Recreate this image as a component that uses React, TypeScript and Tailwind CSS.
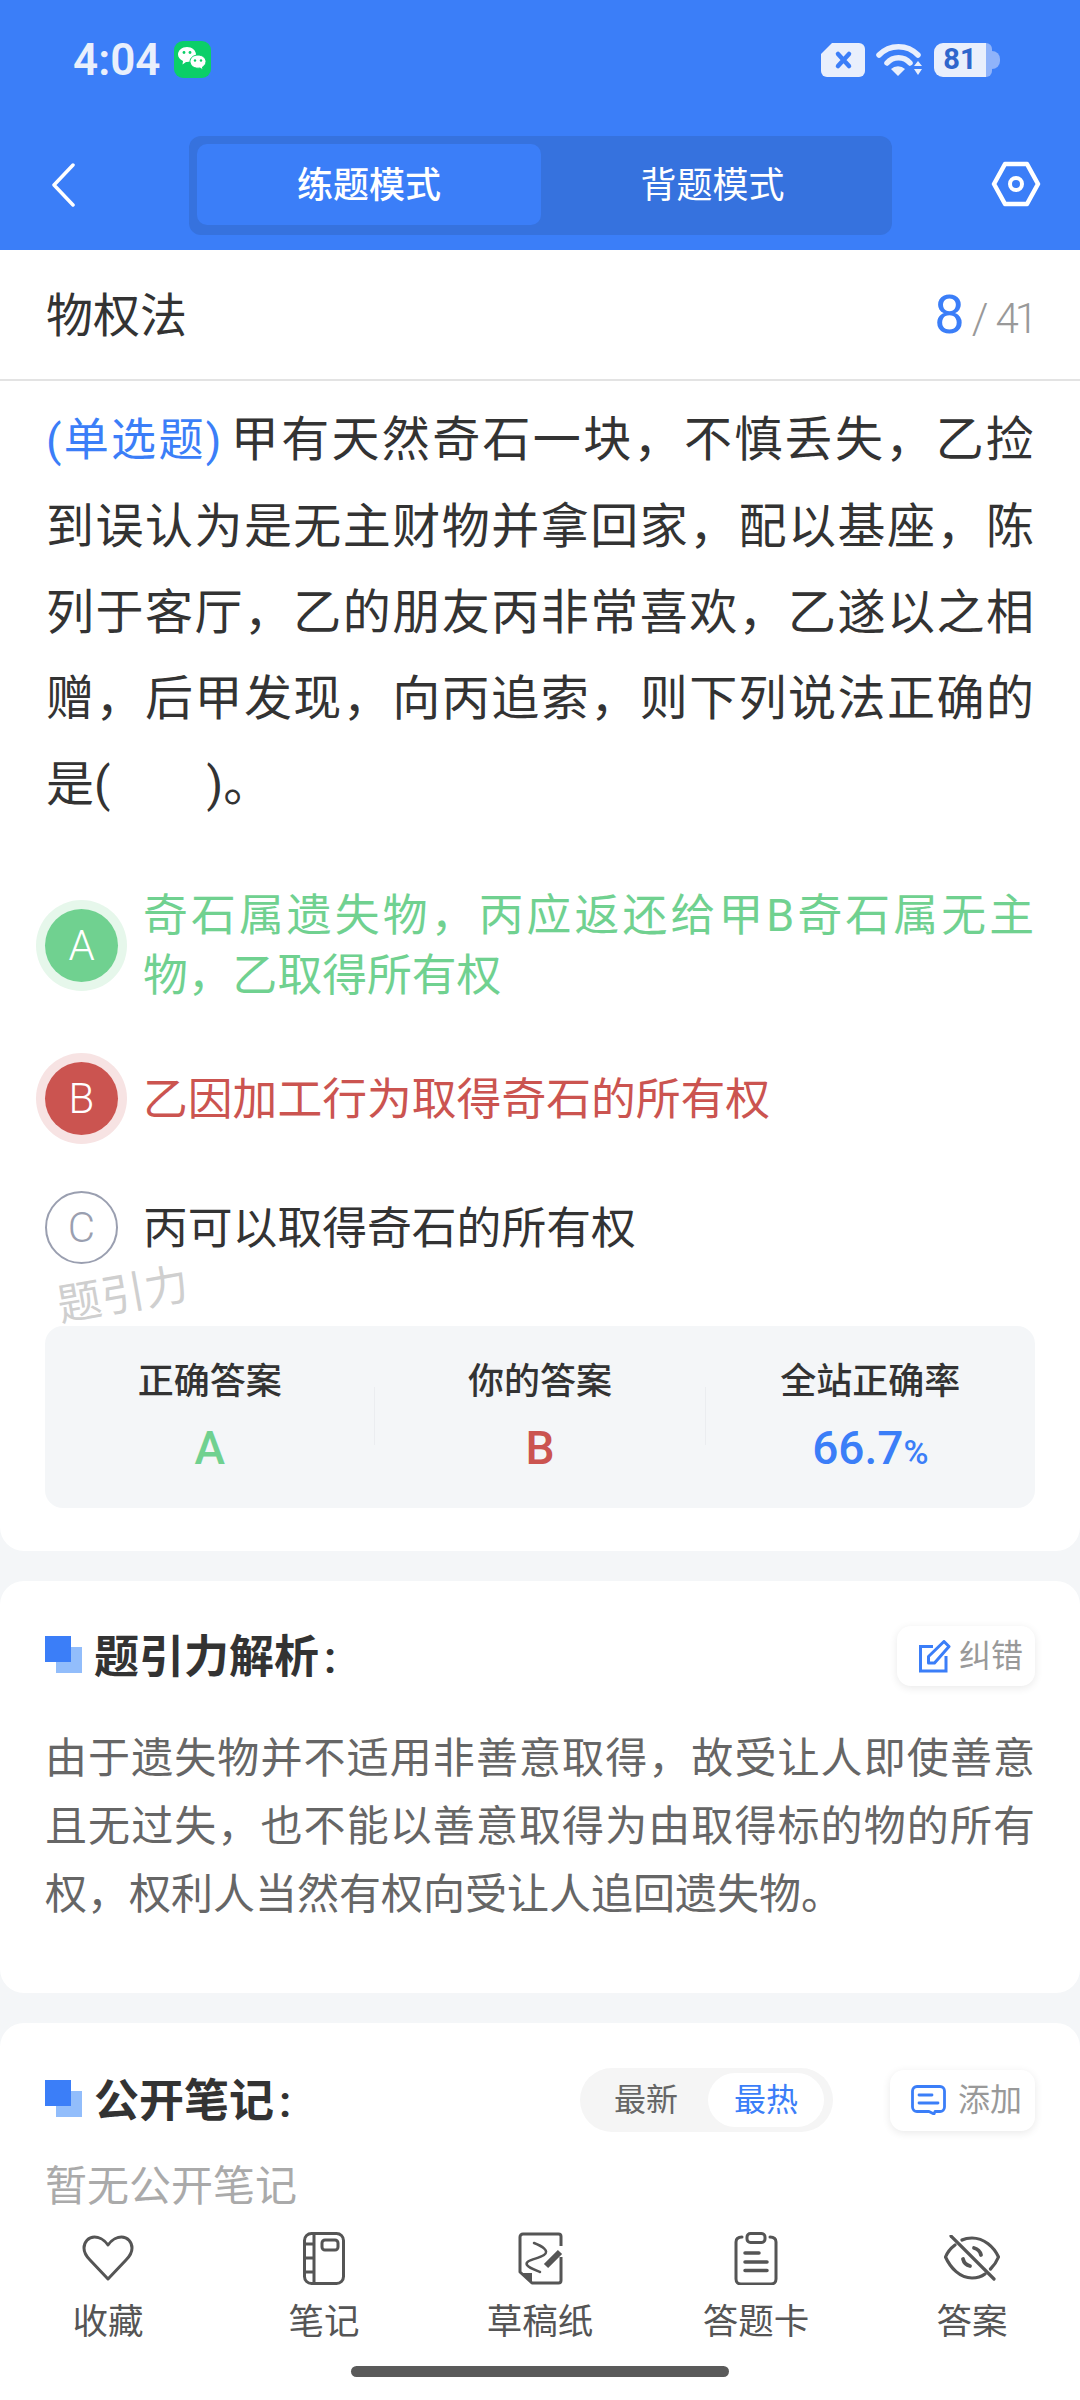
const sansFont = "font-['Roboto','Noto_Sans_CJK_SC',sans-serif]";

function StatusBar() {
  return (
    <div className="flex h-[120px] items-center justify-between pl-[73px] pr-[80px] pb-[1px]">
      <div className="flex items-center gap-[14px]">
        <span className="text-[44px] font-semibold leading-none text-[#e9effc]">4:04</span>
        <svg width="37" height="37" viewBox="0 0 37 37">
          <rect width="37" height="37" rx="9" fill="#0bcf68" />
          <path d="M13 6c5 0 9 3.500 9 7.500S18 21 13 21l-1 0-3.500 2.500 .5-3.500C6 18.500 4 16.500 4 13.500 4 9.500 8 6 13 6Z" fill="#fff" />
          <path d="M24 14c4.500 0 8 3 8 6.500 0 2.500-1.500 4.500-3.500 5.500l.5 3-3-2c-.7 .1-1.300 .2-2 .2-4.500 0-8-3-8-6.700S19.500 14 24 14Z" fill="#fff" stroke="#0bcf68" strokeWidth="1" />
          <circle cx="10" cy="11.500" r="1.400" fill="#0bcf68" />
          <circle cx="16" cy="11.500" r="1.400" fill="#0bcf68" />
          <circle cx="21" cy="19.500" r="1.200" fill="#0bcf68" />
          <circle cx="27" cy="19.500" r="1.200" fill="#0bcf68" />
        </svg>
      </div>
      <div className="flex items-center gap-[11px]">
        <svg width="44" height="34" viewBox="0 0 44 34">
          <path d="M11 0H38a6 6 0 0 1 6 6V28a6 6 0 0 1-6 6H6a6 6 0 0 1-6-6V11Z" fill="#e9effc" />
          <path d="M17 11l11 12M28 11L17 23" stroke="#3b7ef8" strokeWidth="4.500" strokeLinecap="round" />
        </svg>
        <svg width="47" height="34" viewBox="0 0 47 34">
          <path d="M3 12a27 27 0 0 1 39 0" fill="none" stroke="#e9effc" strokeWidth="5.500" strokeLinecap="round" />
          <path d="M11 20a15 15 0 0 1 23 0" fill="none" stroke="#e9effc" strokeWidth="5.500" strokeLinecap="round" />
          <path d="M15 26a10 10 0 0 1 14 0l-7 7Z" fill="#e9effc" />
          <path d="M38 23l4-5 4 5ZM38 26h8l-4 6Z" fill="#e9effc" />
        </svg>
        <div className="relative flex h-[34px] w-[66px] items-center">
          <div className="absolute right-0 top-[8px] h-[18px] w-[14px] rounded-r-[8px] bg-[#8fb3fa]" />
          <div className="absolute right-[8px] top-0 h-[34px] w-[14px] rounded-r-[6px] bg-[#8fb3fa]" />
          <div className="relative flex h-[34px] w-[52px] items-center justify-center rounded-l-[9px] bg-[#e9effc] text-[29px] font-bold leading-none text-[#2f66cc]">
            81
          </div>
        </div>
      </div>
    </div>
  );
}

function TopBar() {
  return (
    <div className="flex h-[130px] items-start justify-between pl-[50px] pr-[39px] pt-[16px]">
      <svg width="26" height="44" viewBox="0 0 26 44" className="mt-[27px]">
        <path d="M23 2 4 22l19 20" fill="none" stroke="#fff" strokeWidth="3.500" strokeLinecap="round" strokeLinejoin="round" />
      </svg>
      <div className="ml-[14px] flex h-[99px] w-[703px] rounded-[12px] bg-[#3672de] p-[8px]">
        <div className="flex h-[81px] w-[344px] items-center justify-center rounded-[10px] bg-[#3b7ef8] pt-[2px] text-[36px] font-medium text-white">
          练题模式
        </div>
        <div className="flex h-[81px] flex-1 items-center justify-center pt-[2px] text-[36px] text-white">背题模式</div>
      </div>
      <svg width="50" height="46" viewBox="0 0 50 46" className="mt-[25px]">
        <path d="M14 3h22l11 20-11 20H14L3 23Z" fill="none" stroke="#fff" strokeWidth="4.500" strokeLinejoin="round" />
        <circle cx="25" cy="23" r="6" fill="none" stroke="#fff" strokeWidth="4" />
      </svg>
    </div>
  );
}

type OptionProps = {
  letter: string;
  text: string;
  state: "right" | "wrong" | "none";
};

function Option({ letter, text, state }: OptionProps) {
  return (
    <div className="flex items-center gap-[25px] pl-[45px] pr-[46px]">
      {state === "right" && (
        <div className="flex h-[73px] w-[73px] shrink-0 items-center justify-center rounded-full bg-[#70d190] text-[42px] font-light text-white ring-[9px] ring-[#e6f7eb]">
          {letter}
        </div>
      )}
      {state === "wrong" && (
        <div className="flex h-[73px] w-[73px] shrink-0 items-center justify-center rounded-full bg-[#cb5450] text-[42px] font-light text-white ring-[9px] ring-[#f7e3e3]">
          {letter}
        </div>
      )}
      {state === "none" && (
        <div className="flex h-[73px] w-[73px] shrink-0 items-center justify-center rounded-full border-2 border-[#9a9fb0] text-[42px] font-light text-[#9a9fb0]">
          {letter}
        </div>
      )}
      <div
        className={
          state === "right"
            ? "flex-1 pt-[2px] text-justify text-[44.800px] leading-[60px] text-[#70d190]"
            : state === "wrong"
              ? "flex-1 pt-[2px] text-justify text-[44.800px] leading-[60px] text-[#cb5450]"
              : "flex-1 pt-[2px] text-justify text-[44.800px] leading-[60px] text-[#333333]"
        }
      >
        {text}
      </div>
    </div>
  );
}

function SectionTitle({ title }: { title: string }) {
  return (
    <div className="flex items-start gap-[12px]">
      <div className="relative mt-[4px] h-[37px] w-[37px] shrink-0">
        <div className="absolute bottom-0 right-0 h-[26px] w-[26px] bg-[#92bdfb]" />
        <div className="absolute left-0 top-0 h-[26px] w-[26px] bg-[#3b7ef8]" />
      </div>
      <div className="pt-[3px] text-[45px] font-semibold leading-none text-[#333333]">
        {title}
        <span className="ml-[5px]">:</span>
      </div>
    </div>
  );
}

function Stat({ label, children }: { label: string; children: React.ReactNode }) {
  return (
    <div className="flex flex-1 flex-col items-center">
      <div className="text-[36px] font-medium leading-[50px] text-[#333333]">{label}</div>
      <div className="mt-[16px] text-[46px] font-medium leading-[50px]">{children}</div>
    </div>
  );
}

function NavItem({ label, children }: { label: string; children: React.ReactNode }) {
  return (
    <div className="flex flex-col items-center">
      <div className="flex h-[56px] items-center justify-center">{children}</div>
      <div className="mt-[11px] text-[35.500px] leading-[50px] text-[#555555]">{label}</div>
    </div>
  );
}

export default function App() {
  return (
    <div className={`flex h-[2400px] w-[1080px] flex-col overflow-hidden bg-white ${sansFont}`}>
      <div className="bg-[#3b7ef8]">
        <StatusBar />
        <TopBar />
      </div>

      <div className="min-h-0 flex-1 overflow-hidden bg-[#f4f6f8]">
        <div className="relative rounded-b-[24px] bg-white pb-[43px]">
          <div className="flex h-[131px] items-center justify-between border-b-2 border-[#e3e3e3] px-[46px]">
            <div className="pt-[2px] text-[47px] leading-none text-[#333333]">物权法</div>
            <div className="flex items-baseline text-[42px] font-light text-[#999999]">
              <span className="text-[54px] font-normal text-[#3b7ef8]">8</span>
              <span className="mx-[7px]">/</span>
              <span className="tracking-[-4px]">41</span>
            </div>
          </div>

          <div className="px-[46px] pt-[16px] text-justify text-[48px] leading-[86px] text-[#333333]">
            <span className="mr-[7px] text-[45px] text-[#3b7ef8]">(单选题)</span>甲有天然奇石一块，不慎丢失，乙捡到误认为是无主财物并拿回家，配以基座，陈列于客厅，乙的朋友丙非常喜欢，乙遂以之相赠，后甲发现，向丙追索，则下列说法正确的是(　　)。
          </div>

          <div className="mt-[56px] flex flex-col gap-[56px]">
            <Option state="right" letter="A" text="奇石属遗失物，丙应返还给甲B奇石属无主物，乙取得所有权" />
            <Option state="wrong" letter="B" text="乙因加工行为取得奇石的所有权" />
            <Option state="none" letter="C" text="丙可以取得奇石的所有权" />
          </div>

          <div className="absolute left-[57px] top-[1023px] -rotate-[10deg] text-[44px] leading-none text-[#cfcfcf]">题引力</div>

          <div className="mx-[45px] mt-[62px] flex h-[182px] items-start rounded-[18px] bg-[#f4f6f8] pt-[31px]">
            <Stat label="正确答案">
              <span className="text-[#70d190]">A</span>
            </Stat>
            <div className="mt-[30px] h-[58px] w-[1px] bg-[#ebedf0]" />
            <Stat label="你的答案">
              <span className="text-[#cb5450]">B</span>
            </Stat>
            <div className="mt-[30px] h-[58px] w-[1px] bg-[#ebedf0]" />
            <Stat label="全站正确率">
              <span className="text-[#3b7ef8]">
                66.7<span className="text-[34px]">%</span>
              </span>
            </Stat>
          </div>
        </div>

        <div className="mt-[30px] h-[412px] rounded-[24px] bg-white px-[45px] pt-[45px]">
          <div className="flex items-start justify-between">
            <div className="pt-[6px]">
              <SectionTitle title="题引力解析" />
            </div>
            <div className="flex h-[60px] w-[138px] items-center gap-[8px] rounded-[14px] bg-white pl-[21px] shadow-[0_2px_8px_rgba(0,0,0,0.09)]">
              <svg width="33" height="33" viewBox="0 0 33 33" fill="none" stroke="#3b7ef8" strokeWidth="3">
                <path d="M15 6.500H2.500V31H28V16" />
                <path d="M10.500 23v-6.500L26 1.500l5 5L16.500 23Z" strokeLinejoin="round" />
              </svg>
              <span className="text-[32px] leading-none text-[#999999]">纠错</span>
            </div>
          </div>
          <div className="mt-[39px] text-justify text-[42px] leading-[68px] text-[#666666]">
            由于遗失物并不适用非善意取得，故受让人即使善意且无过失，也不能以善意取得为由取得标的物的所有权，权利人当然有权向受让人追回遗失物。
          </div>
        </div>

        <div className="mt-[30px] h-[300px] rounded-t-[24px] bg-white px-[45px] pt-[45px]">
          <div className="flex items-center">
            <SectionTitle title="公开笔记" />
            <div className="ml-auto flex h-[64px] w-[253px] items-center rounded-full bg-[#f5f5f5] pl-[34px] pr-[9px] text-[32px] text-[#666666]">
              <span>最新</span>
              <div className="ml-[30px] flex h-[54px] flex-1 items-center justify-center rounded-full bg-white text-[#3b7ef8]">最热</div>
            </div>
            <div className="ml-[57px] flex h-[61px] w-[145px] items-center gap-[12px] rounded-[14px] bg-white pl-[21px] shadow-[0_2px_8px_rgba(0,0,0,0.09)]">
              <svg width="35" height="30" viewBox="0 0 35 30" fill="none" stroke="#3b7ef8" strokeWidth="2.800" strokeLinecap="round">
                <path d="M6 1.500h23a4.500 4.500 0 0 1 4.500 4.500v16a4.500 4.500 0 0 1-4.500 4.500h-5l-1 2.500-5-2.500H6A4.500 4.500 0 0 1 1.500 22V6A4.500 4.500 0 0 1 6 1.500Z" strokeLinejoin="round" />
                <path d="M8 10h13M8 18h19" />
              </svg>
              <span className="text-[32px] leading-none text-[#999999]">添加</span>
            </div>
          </div>
          <div className="mt-[25px] text-[42px] leading-[60px] text-[#aaaaaa]">暂无公开笔记</div>
        </div>
      </div>

      <div className="h-[185px] shrink-0 bg-white pt-[15px]">
        <div className="grid grid-cols-5">
          <NavItem label="收藏">
            <svg width="52" height="46" viewBox="0 0 52 46" fill="none" stroke="#555555" strokeWidth="3" strokeLinejoin="round">
              <path d="M26 10C22 4 16 2 12.500 2 6.500 2 2 7 2 13c0 5 3 9 6 12l18 19 18-19c3-3 6-7 6-12 0-6-4.500-11-10.500-11C36 2 30 4 26 10Z" />
            </svg>
          </NavItem>
          <NavItem label="笔记">
            <svg width="42" height="53" viewBox="0 0 42 53" fill="none" stroke="#555555" strokeWidth="3">
              <rect x="1.500" y="1.500" width="39" height="50" rx="7" />
              <path d="M11 1.500v50M1.500 12h9.500M1.500 26h9.500M1.500 40h9.500" />
              <rect x="19" y="8" width="16" height="10" rx="3" />
            </svg>
          </NavItem>
          <NavItem label="草稿纸">
            <svg width="45" height="53" viewBox="0 0 45 53" fill="none" stroke="#555555" strokeWidth="3" strokeLinejoin="round">
              <path d="M43 14V4.500a2.500 2.500 0 0 0-2.500-2.500H5A3 3 0 0 0 2 5v35l12 11h26.500a2.500 2.500 0 0 0 2.500-2.500V25" />
              <path d="M3 41h11v10Z" fill="#555555" stroke="none" />
              <path d="M16 11c8 3 16 8 10 12S6 28 9 33c2 3 8 5 13 7" strokeWidth="2.500" strokeLinecap="round" />
              <path d="M28 34l14-14" strokeWidth="6" />
            </svg>
          </NavItem>
          <NavItem label="答题卡">
            <svg width="44" height="53" viewBox="0 0 44 53" fill="none" stroke="#555555" strokeWidth="3" strokeLinecap="round">
              <path d="M8 5C4 5 2 7 2 10v37c0 3 2 5 5 5h30c3 0 5-2 5-5V10c0-3-2-5-6-5" />
              <rect x="13" y="1.500" width="18" height="9" rx="3.500" />
              <path d="M11 21h14M11 30h22M11 38.500h22" strokeWidth="3.500" />
            </svg>
          </NavItem>
          <NavItem label="答案">
            <svg width="56" height="46" viewBox="0 0 56 46" fill="none" stroke="#555555" strokeWidth="3.200" strokeLinecap="round" strokeLinejoin="round">
              <path d="M18 5c3-1.500 6-2 10-2 12 0 22 9 26.500 19-2 5-5 9-8 12" />
              <path d="M11 10C7 13 3.500 17 1.500 22 6.500 33 16 43 28 43c5 0 9-1 13-4" />
              <path d="M30 13a9.500 9.500 0 0 1 7 7M19 24a9.500 9.500 0 0 0 7 7" strokeWidth="3.800" />
              <path d="M7 1l43 43" />
            </svg>
          </NavItem>
        </div>
        <div className="mx-auto mt-[19px] h-[11px] w-[378px] rounded-full bg-[#5a5a5a]" />
      </div>
    </div>
  );
}
